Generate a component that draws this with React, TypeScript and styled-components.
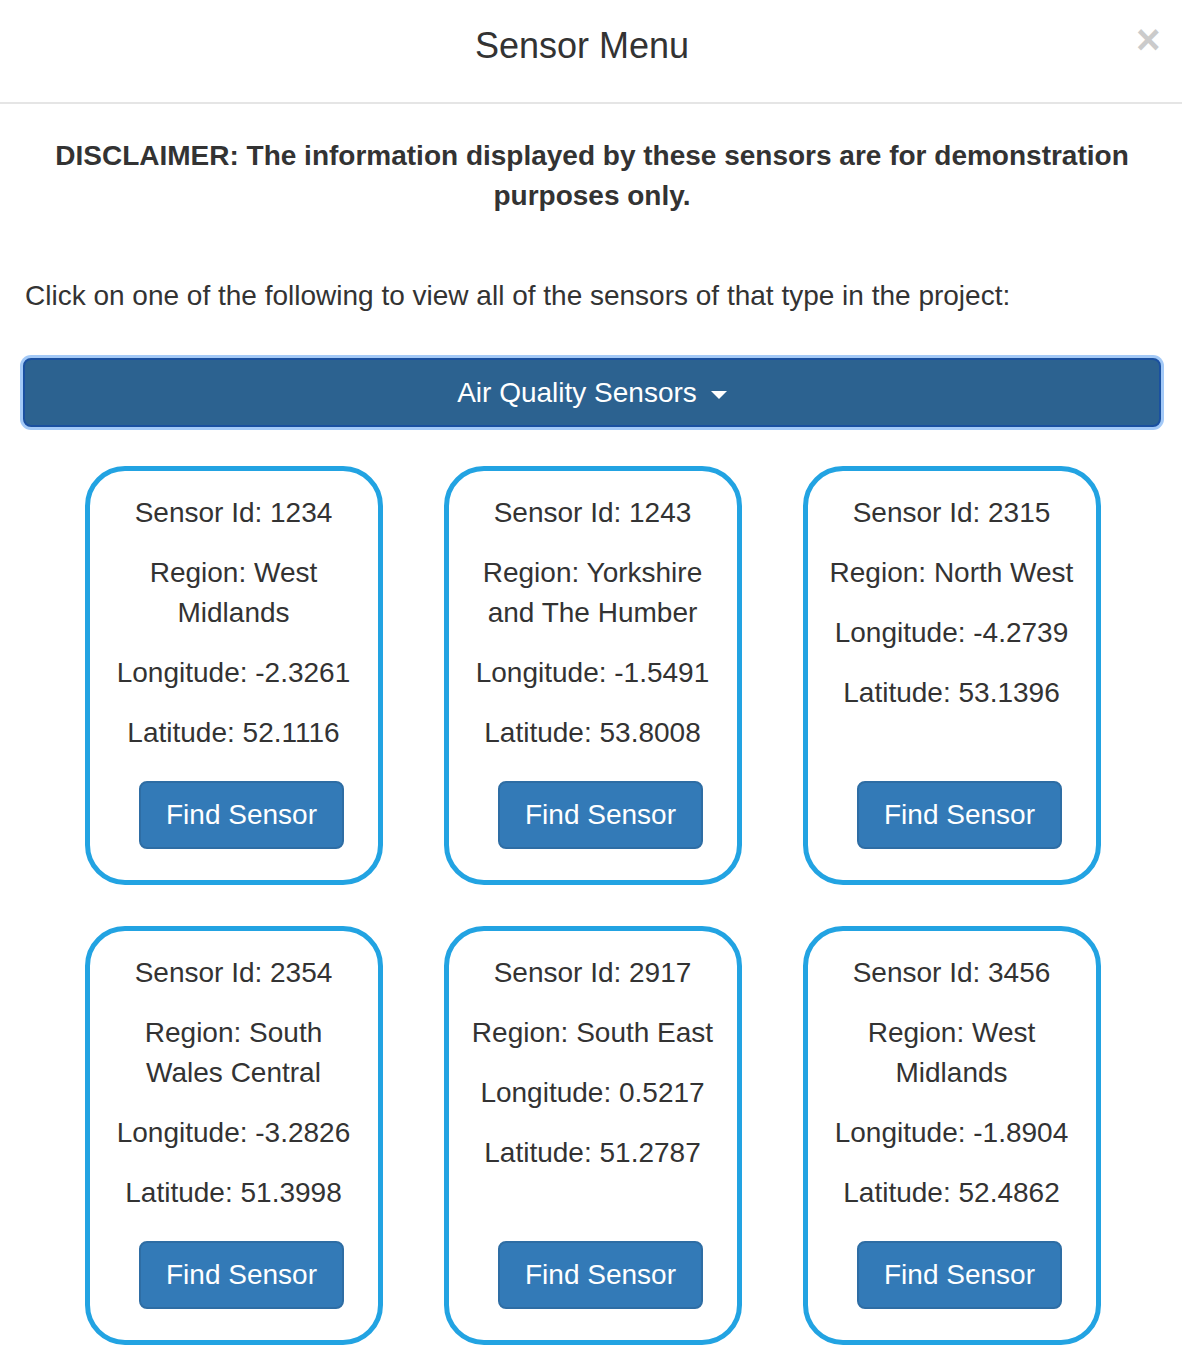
import React from "react";
import styled, { createGlobalStyle } from "styled-components";

const GlobalStyle = createGlobalStyle`
  html, body {
    margin: 0;
    padding: 0;
    background: #ffffff;
  }
  body {
    font-family: "Liberation Sans", Arial, Helvetica, sans-serif;
    font-size: 28px;
    line-height: 40px;
    color: #333333;
  }
  * { box-sizing: border-box; }
`;

const Modal = styled.div`
  width: 1182px;
  background: #fff;
`;

const Header = styled.header`
  display: flex;
  align-items: flex-start;
  padding: 20px 22px 30px 28px;
  border-bottom: 2px solid #e5e5e5;
`;

const Title = styled.h4`
  flex: 1;
  margin: 0;
  text-align: center;
  font-size: 36px;
  font-weight: normal;
  line-height: 52px;
  color: #333;
`;

const Close = styled.button`
  border: 0;
  background: transparent;
  padding: 0;
  margin-top: -1px;
  width: 24px;
  font-family: "Liberation Sans", Arial, sans-serif;
  font-size: 42px;
  font-weight: bold;
  line-height: 42px;
  color: #000;
  opacity: 0.2;
  cursor: pointer;
`;

const Body = styled.main`
  padding: 32px 21px 40px 23px;
`;

const Disclaimer = styled.p`
  margin: 0 0 60px;
  text-align: center;
  font-weight: bold;
  padding: 0 30px;
`;

const Intro = styled.p`
  margin: 0 0 42px 2px;
`;

const DropdownButton = styled.button`
  display: flex;
  width: 100%;
  height: 69px;
  align-items: center;
  justify-content: center;
  gap: 14px;
  background: #2c6290;
  color: #fff;
  border: 2px solid #1a50a0;
  border-radius: 8px;
  box-shadow: 0 0 0 3px #a3c9f7;
  font-family: "Liberation Sans", Arial, sans-serif;
  font-size: 28px;
  line-height: 40px;
  padding: 0 24px;
  cursor: pointer;
`;

const Caret = styled.span`
  display: inline-block;
  width: 0;
  height: 0;
  margin-top: 4px;
  border-top: 8px solid #fff;
  border-left: 8px solid transparent;
  border-right: 8px solid transparent;
`;

const Grid = styled.div`
  display: grid;
  grid-template-columns: repeat(3, 298px);
  column-gap: 61px;
  row-gap: 41px;
  justify-content: center;
  margin-top: 39px;
  padding-left: 1px;
`;

const Card = styled.div`
  display: flex;
  flex-direction: column;
  border: 5px solid #22a3e2;
  border-radius: 40px;
  padding: 22px 18px 31px;
  text-align: center;
  min-height: 419px;
`;

const Line = styled.p`
  margin: 0 0 20px;
`;

const Actions = styled.div`
  margin-top: auto;
  padding-top: 8px;
  display: flex;
  justify-content: center;
`;

const FindButton = styled.button`
  margin-left: 16px;
  height: 68px;
  padding: 12px 25px;
  background: #337ab7;
  border: 2px solid #2e6da4;
  border-radius: 8px;
  color: #fff;
  font-family: "Liberation Sans", Arial, sans-serif;
  font-size: 28px;
  line-height: 40px;
  cursor: pointer;
  white-space: nowrap;
`;

type Sensor = {
  id: number;
  region: string;
  lon: string;
  lat: string;
};

const sensors: Sensor[] = [
  { id: 1234, region: "West Midlands", lon: "-2.3261", lat: "52.1116" },
  { id: 1243, region: "Yorkshire and The Humber", lon: "-1.5491", lat: "53.8008" },
  { id: 2315, region: "North West", lon: "-4.2739", lat: "53.1396" },
  { id: 2354, region: "South Wales Central", lon: "-3.2826", lat: "51.3998" },
  { id: 2917, region: "South East", lon: "0.5217", lat: "51.2787" },
  { id: 3456, region: "West Midlands", lon: "-1.8904", lat: "52.4862" },
];

export default function App() {
  return (
    <>
      <GlobalStyle />
      <Modal>
        <Header>
          <Title>Sensor Menu</Title>
          <Close aria-label="Close">×</Close>
        </Header>
        <Body>
          <Disclaimer>
            DISCLAIMER: The information displayed by these sensors are for demonstration purposes only.
          </Disclaimer>
          <Intro>
            Click on one of the following to view all of the sensors of that type in the project:
          </Intro>
          <DropdownButton>
            <span>Air Quality Sensors</span>
            <Caret />
          </DropdownButton>
          <Grid>
            {sensors.map((s) => (
              <Card key={s.id}>
                <Line>Sensor Id: {s.id}</Line>
                <Line>Region: {s.region}</Line>
                <Line>Longitude: {s.lon}</Line>
                <Line>Latitude: {s.lat}</Line>
                <Actions>
                  <FindButton>Find Sensor</FindButton>
                </Actions>
              </Card>
            ))}
          </Grid>
        </Body>
      </Modal>
    </>
  );
}
